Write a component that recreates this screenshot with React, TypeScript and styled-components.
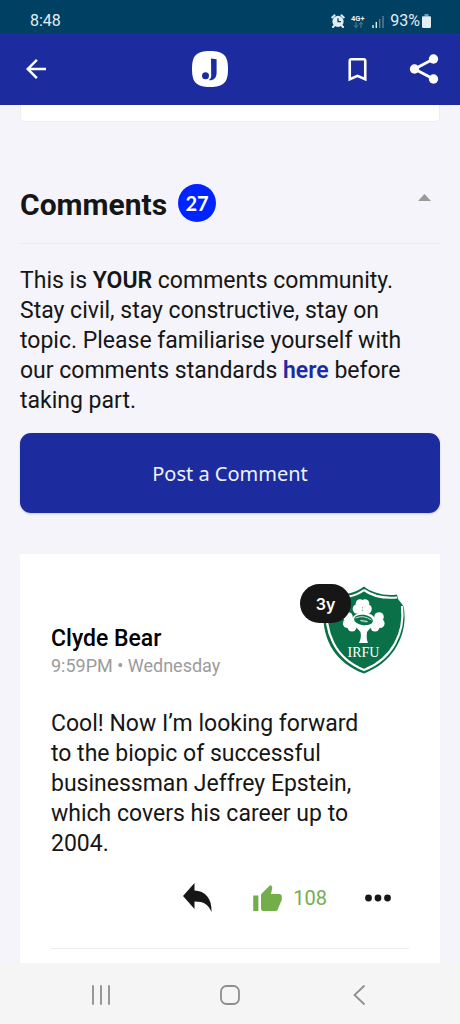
import React from "react";
import styled, { createGlobalStyle } from "styled-components";

const GlobalStyle = createGlobalStyle`
  *, *::before, *::after { box-sizing: border-box; }
  body { margin: 0; background: #f4f4fa; }
  button { font: inherit; color: inherit; border: 0; background: none; padding: 0; cursor: pointer; }
  h1, h2, h3, p { margin: 0; }
  svg { display: block; }
`;

const Screen = styled.div`
  display: flex;
  flex-direction: column;
  height: 100vh;
  background: #f4f4fa;
  color: #161616;
  font-family: Roboto, "Liberation Sans", sans-serif;
`;

const StatusBar = styled.div`
  display: flex;
  align-items: center;
  justify-content: space-between;
  flex: none;
  height: 33px;
  padding: 9px 29px 0 30px;
  background: #004063;
  color: #e3edf4;
  font-size: 16px;
  line-height: 24px;
`;

const StatusIcons = styled.div`
  display: flex;
  align-items: center;
  gap: 6px;
`;

const Battery = styled.div`
  display: flex;
  align-items: center;
  gap: 2px;
`;

const AppBar = styled.header`
  display: grid;
  grid-template-columns: 77px 1fr auto;
  align-items: center;
  flex: none;
  height: 72px;
  padding-right: 17px;
  background: #1c2c9f;
  color: #fff;
`;

const IconButton = styled.button<{ $indent?: number }>`
  display: flex;
  align-items: center;
  margin-left: ${({ $indent = 0 }) => $indent}px;
`;

const Brand = styled.div`
  display: flex;
  justify-content: center;
`;

const BarActions = styled.div`
  display: flex;
  align-items: center;
  gap: 32px;
`;

const Content = styled.main`
  display: flex;
  flex-direction: column;
  flex: 1;
  min-height: 0;
  overflow: hidden;
  padding: 0 20px;
`;

const PreviousCard = styled.div`
  flex: none;
  height: 17px;
  background: #fff;
  border: 1px solid #eeeef2;
  border-top: 0;
  border-radius: 0 0 5px 5px;
`;

const SectionHeader = styled.div`
  display: flex;
  align-items: center;
  flex: none;
  height: 82px;
  margin-top: 40px;
  border-bottom: 1px solid #ebebf0;
`;

const Title = styled.h2`
  padding-top: 4px;
  font-size: 30px;
  line-height: 36px;
  font-weight: 700;
`;

const CountBadge = styled.span`
  display: flex;
  align-items: center;
  justify-content: center;
  width: 38px;
  height: 38px;
  margin-left: 11px;
  border-radius: 50%;
  background: #0024ff;
  color: #fff;
  font-family: Lato, sans-serif;
  font-size: 20px;
  font-weight: 700;
`;

const CollapseButton = styled.button`
  margin: 0 9px 10px auto;
`;

const Intro = styled.p`
  flex: none;
  margin-top: 22px;
  font-size: 23px;
  line-height: 30px;

  strong,
  a {
    font-weight: 600;
  }

  a {
    color: #1c2c9f;
    text-decoration: none;
  }
`;

const PostButton = styled.button`
  flex: none;
  height: 80px;
  margin-top: 17px;
  border-radius: 11px;
  background: #1c2c9f;
  color: #f0f2fb;
  font-family: "Noto Sans", sans-serif;
  font-size: 20px;
  box-shadow: 0 1px 2px rgba(20, 30, 90, 0.2);
`;

const CommentCard = styled.article`
  flex: 1 0 auto;
  margin-top: 41px;
  padding: 30px 31px 14px;
  background: #fff;
`;

const CommentHeader = styled.header`
  display: flex;
  align-items: flex-end;
  justify-content: space-between;
  height: 95px;
`;

const Author = styled.h3`
  color: #000;
  font-size: 23px;
  line-height: 28px;
  font-weight: 500;
`;

const Timestamp = styled.p`
  color: #9b9b9b;
  font-size: 18px;
  line-height: 26px;
`;

const AvatarWrap = styled.div`
  position: relative;
  align-self: flex-start;
  margin: 2px 3px 0 0;
`;

const AgeBadge = styled.span`
  position: absolute;
  top: -2px;
  left: -22px;
  display: flex;
  align-items: center;
  justify-content: center;
  width: 51px;
  height: 39px;
  border-radius: 20px;
  background: #161616;
  color: #fff;
  font-family: Inter, sans-serif;
  font-size: 16px;
  font-weight: 600;
`;

const CommentText = styled.p`
  max-width: 326px;
  margin-top: 30px;
  font-size: 23px;
  line-height: 30px;
`;

const CommentActions = styled.footer`
  display: flex;
  align-items: center;
  justify-content: flex-end;
  height: 90px;
  padding: 0 18px 12px 0;
  border-bottom: 1px solid #ececec;
`;

const LikeButton = styled.button`
  display: flex;
  align-items: center;
  gap: 11px;
  margin: 0 38px 0 41px;
  color: #73ae4b;
  font-size: 20px;
  line-height: 28px;
`;

const NavBar = styled.nav`
  display: flex;
  align-items: center;
  justify-content: space-around;
  flex: none;
  height: 61px;
  padding: 2px 37px 0;
  background: #f5f5f5;
  color: #8e8e8e;
`;

const NavButton = styled.button`
  display: flex;
  justify-content: center;
  width: 40px;
`;

const AlarmIcon = () => (
  <svg width="14" height="14" viewBox="0 0 14 14" aria-hidden="true">
    <circle cx="7" cy="7.4" r="5.6" fill="#e3edf4" />
    <path d="M1.200 3.400 3.600 1.300M12.800 3.400 10.400 1.300M3 11.800l-1 1.200M11 11.800l1 1.200" stroke="#e3edf4" strokeWidth="2" strokeLinecap="round" />
    <path d="M7 4.200v3.500h3" fill="none" stroke="#004063" strokeWidth="1.300" />
  </svg>
);

const NetworkIcon = () => (
  <svg width="15" height="15" viewBox="0 0 15 15" aria-hidden="true">
    <text x="0" y="6.500" fontSize="7.500" fontWeight="700" fontFamily="Roboto, sans-serif" fill="#e3edf4">4G+</text>
    <path d="M5 8v5.500M3 11.300l2 2.200 2-2.200M10 13.800V8.300M8 10.500l2-2.200 2 2.200" fill="none" stroke="#5c8299" strokeWidth="1" />
  </svg>
);

const SignalIcon = () => (
  <svg width="12" height="13" viewBox="0 0 12 13" aria-hidden="true">
    <path d="M1 13v-3M4.300 13V7" stroke="#e3edf4" strokeWidth="1.400" />
    <path d="M7.700 13V4M11 13V1" stroke="#5c8299" strokeWidth="1.400" />
  </svg>
);

const BatteryIcon = () => (
  <svg width="9" height="14" viewBox="0 0 9 14" aria-hidden="true">
    <path d="M2.500 0h4v2H9v2H0V2h2.500z" fill="#779bb0" />
    <rect y="2.500" width="9" height="11.500" rx="1.500" fill="#e3edf4" />
  </svg>
);

const BackIcon = () => (
  <svg width="30" height="30" viewBox="0 0 24 24" fill="currentColor" aria-hidden="true">
    <path d="M20 11H7.830l5.590-5.590L12 4l-8 8 8 8 1.410-1.410L7.830 13H20z" />
  </svg>
);

const BrandLogo = () => (
  <svg width="36" height="36" viewBox="0 0 36 36" role="img" aria-label="The Journal">
    <path d="M18 0C31.500 0 36 4.500 36 18S31.500 36 18 36 0 31.500 0 18 4.500 0 18 0z" fill="#fff" />
    <circle cx="13.500" cy="24.800" r="3.500" fill="#1c2c9f" />
    <path d="M19 7.500 24.600 8.300V21.500C24.600 26.500 22.300 29.300 17.300 29.300V28.400C18.700 27.700 19.200 26.400 19.200 24.200z" fill="#1c2c9f" />
  </svg>
);

const BookmarkIcon = () => (
  <svg width="31" height="31" viewBox="0 0 24 24" fill="currentColor" aria-hidden="true">
    <path d="M17 3H7c-1.100 0-2 .9-2 2v16l7-3 7 3V5c0-1.100-.9-2-2-2zm0 15-5-2.180L7 18V5h10z" />
  </svg>
);

const ShareIcon = () => (
  <svg width="38" height="38" viewBox="0 0 24 24" fill="currentColor" aria-hidden="true">
    <path d="M6 12 18 5.700M6 12l12 6.300" stroke="currentColor" strokeWidth="1.900" />
    <circle cx="18" cy="5.700" r="2.950" />
    <circle cx="6" cy="12" r="2.950" />
    <circle cx="18" cy="18.300" r="2.950" />
  </svg>
);

const ClubCrest = () => (
  <svg width="84" height="89" viewBox="0 0 84 89" role="img" aria-label="IRFU crest">
    <path d="M42 .5C49 6.500 63 10.500 75 8.500L76 13 81.500 20C86.500 44 75 75 42 87.500 9 75-2 48 2 16L4 8.500C19 11 34 7 42 .5z" fill="#0a7048" />
    <path d="M42 4C50 10 62 12.500 75 11.500M80 20C83 46 71 72.500 42 84 13 72.500 1.500 46 5 15L6 11.500C19 13 34 10.500 42 4" fill="none" stroke="#fff" strokeWidth="2.200" />
    <g fill="#fff">
      <circle cx="35.500" cy="23" r="4.800" />
      <circle cx="38" cy="17.500" r="4.300" />
      <circle cx="43" cy="17.500" r="4.300" />
      <circle cx="45" cy="23" r="4.800" />
      <path d="M36 25h9l-2.500 4h-4z" />
      <circle cx="26" cy="31" r="4.800" />
      <circle cx="25.500" cy="37.500" r="4.600" />
      <circle cx="30" cy="41" r="4.500" />
      <circle cx="57" cy="31" r="4.800" />
      <circle cx="58" cy="37.500" r="4.600" />
      <circle cx="53" cy="41" r="4.500" />
      <path d="M27 31 33 33v8h-7zM56 31 50 33v8h7z" />
      <ellipse cx="41.500" cy="34.500" rx="11.500" ry="8" />
      <path d="M33 40 38.500 46C39.500 50 38.500 54 37 57H46C44.500 54 44.500 50 45 46L50 40z" />
    </g>
    <ellipse cx="41.500" cy="34" rx="9.500" ry="5.200" fill="#0a7048" transform="rotate(8 41.500 34)" />
    <path d="M33.500 32q8-3.500 16 2" fill="none" stroke="#fff" strokeWidth=".8" />
    <path d="M38 34.500l8 1.200M40 33.500v2.500M42 33.800v2.500M44 34.200v2.500" fill="none" stroke="#fff" strokeWidth=".6" />
    <text x="41.500" y="71" textAnchor="middle" fontFamily="Liberation Serif, serif" fontSize="14" fill="#fff">IRFU</text>
  </svg>
);

const ReplyIcon = () => (
  <svg width="29" height="29" viewBox="0 0 29 29" fill="#161616" aria-hidden="true">
    <path d="M0 13 11.500 0V7.500C22 8 29 15 28.500 29 25.500 21.500 21 18.500 11.500 18.500V26z" />
  </svg>
);

const ThumbIcon = () => (
  <svg width="29" height="26" viewBox="1 1 22 20" fill="currentColor" aria-hidden="true">
    <path d="M1 21h4V9H1v12zm22-11c0-1.100-.9-2-2-2h-6.310l.95-4.570.03-.32c0-.41-.17-.79-.44-1.060L14.170 1 7.590 7.590C7.220 7.950 7 8.450 7 9v10c0 1.100.9 2 2 2h9c.83 0 1.540-.5 1.840-1.220l3.020-7.050c.09-.23.14-.47.14-.73v-2z" />
  </svg>
);

const MoreIcon = () => (
  <svg width="26" height="8" viewBox="0 0 26 8" fill="#161616" aria-hidden="true">
    <circle cx="3.500" cy="4" r="3.400" />
    <circle cx="13" cy="4" r="3.400" />
    <circle cx="22.500" cy="4" r="3.400" />
  </svg>
);

export default function App() {
  return (
    <Screen>
      <GlobalStyle />
      <StatusBar>
        <span>8:48</span>
        <StatusIcons>
          <AlarmIcon />
          <NetworkIcon />
          <SignalIcon />
          <Battery>
            <span>93%</span>
            <BatteryIcon />
          </Battery>
        </StatusIcons>
      </StatusBar>

      <AppBar>
        <IconButton $indent={21} aria-label="Back"><BackIcon /></IconButton>
        <Brand><BrandLogo /></Brand>
        <BarActions>
          <IconButton aria-label="Bookmark"><BookmarkIcon /></IconButton>
          <IconButton aria-label="Share"><ShareIcon /></IconButton>
        </BarActions>
      </AppBar>

      <Content>
        <PreviousCard />
        <SectionHeader>
          <Title>Comments</Title>
          <CountBadge>27</CountBadge>
          <CollapseButton aria-label="Collapse comments">
            <svg width="13" height="7" viewBox="0 0 13 7" aria-hidden="true">
              <path d="M6.500 0 13 7H0z" fill="#9a9a9a" />
            </svg>
          </CollapseButton>
        </SectionHeader>
        <Intro>
          This is <strong>YOUR</strong> comments community. Stay civil, stay constructive, stay on
          topic. Please familiarise yourself with our comments standards <a href="#standards">here</a> before
          taking part.
        </Intro>
        <PostButton>Post a Comment</PostButton>

        <CommentCard>
          <CommentHeader>
            <div>
              <Author>Clyde Bear</Author>
              <Timestamp>9:59PM • Wednesday</Timestamp>
            </div>
            <AvatarWrap>
              <ClubCrest />
              <AgeBadge>3y</AgeBadge>
            </AvatarWrap>
          </CommentHeader>
          <CommentText>
            Cool! Now I’m looking forward to the biopic of successful businessman Jeffrey Epstein,
            which covers his career up to 2004.
          </CommentText>
          <CommentActions>
            <IconButton aria-label="Reply"><ReplyIcon /></IconButton>
            <LikeButton aria-label="Like, 108"><ThumbIcon />108</LikeButton>
            <IconButton aria-label="More options"><MoreIcon /></IconButton>
          </CommentActions>
        </CommentCard>
      </Content>

      <NavBar>
        <NavButton aria-label="Recent apps">
          <svg width="20" height="20" viewBox="0 0 20 20" stroke="currentColor" strokeWidth="1.800" strokeLinecap="round" aria-hidden="true">
            <path d="M2 1v18M10 1v18M18 1v18" />
          </svg>
        </NavButton>
        <NavButton aria-label="Home">
          <svg width="20" height="20" viewBox="0 0 20 20" fill="none" stroke="currentColor" strokeWidth="1.800" aria-hidden="true">
            <rect x="1" y="1" width="18" height="18" rx="5.500" />
          </svg>
        </NavButton>
        <NavButton aria-label="Back">
          <svg width="12" height="20" viewBox="0 0 12 20" fill="none" stroke="currentColor" strokeWidth="1.800" strokeLinecap="round" aria-hidden="true">
            <path d="M11 1 1.500 10l9.500 9" />
          </svg>
        </NavButton>
      </NavBar>
    </Screen>
  );
}
